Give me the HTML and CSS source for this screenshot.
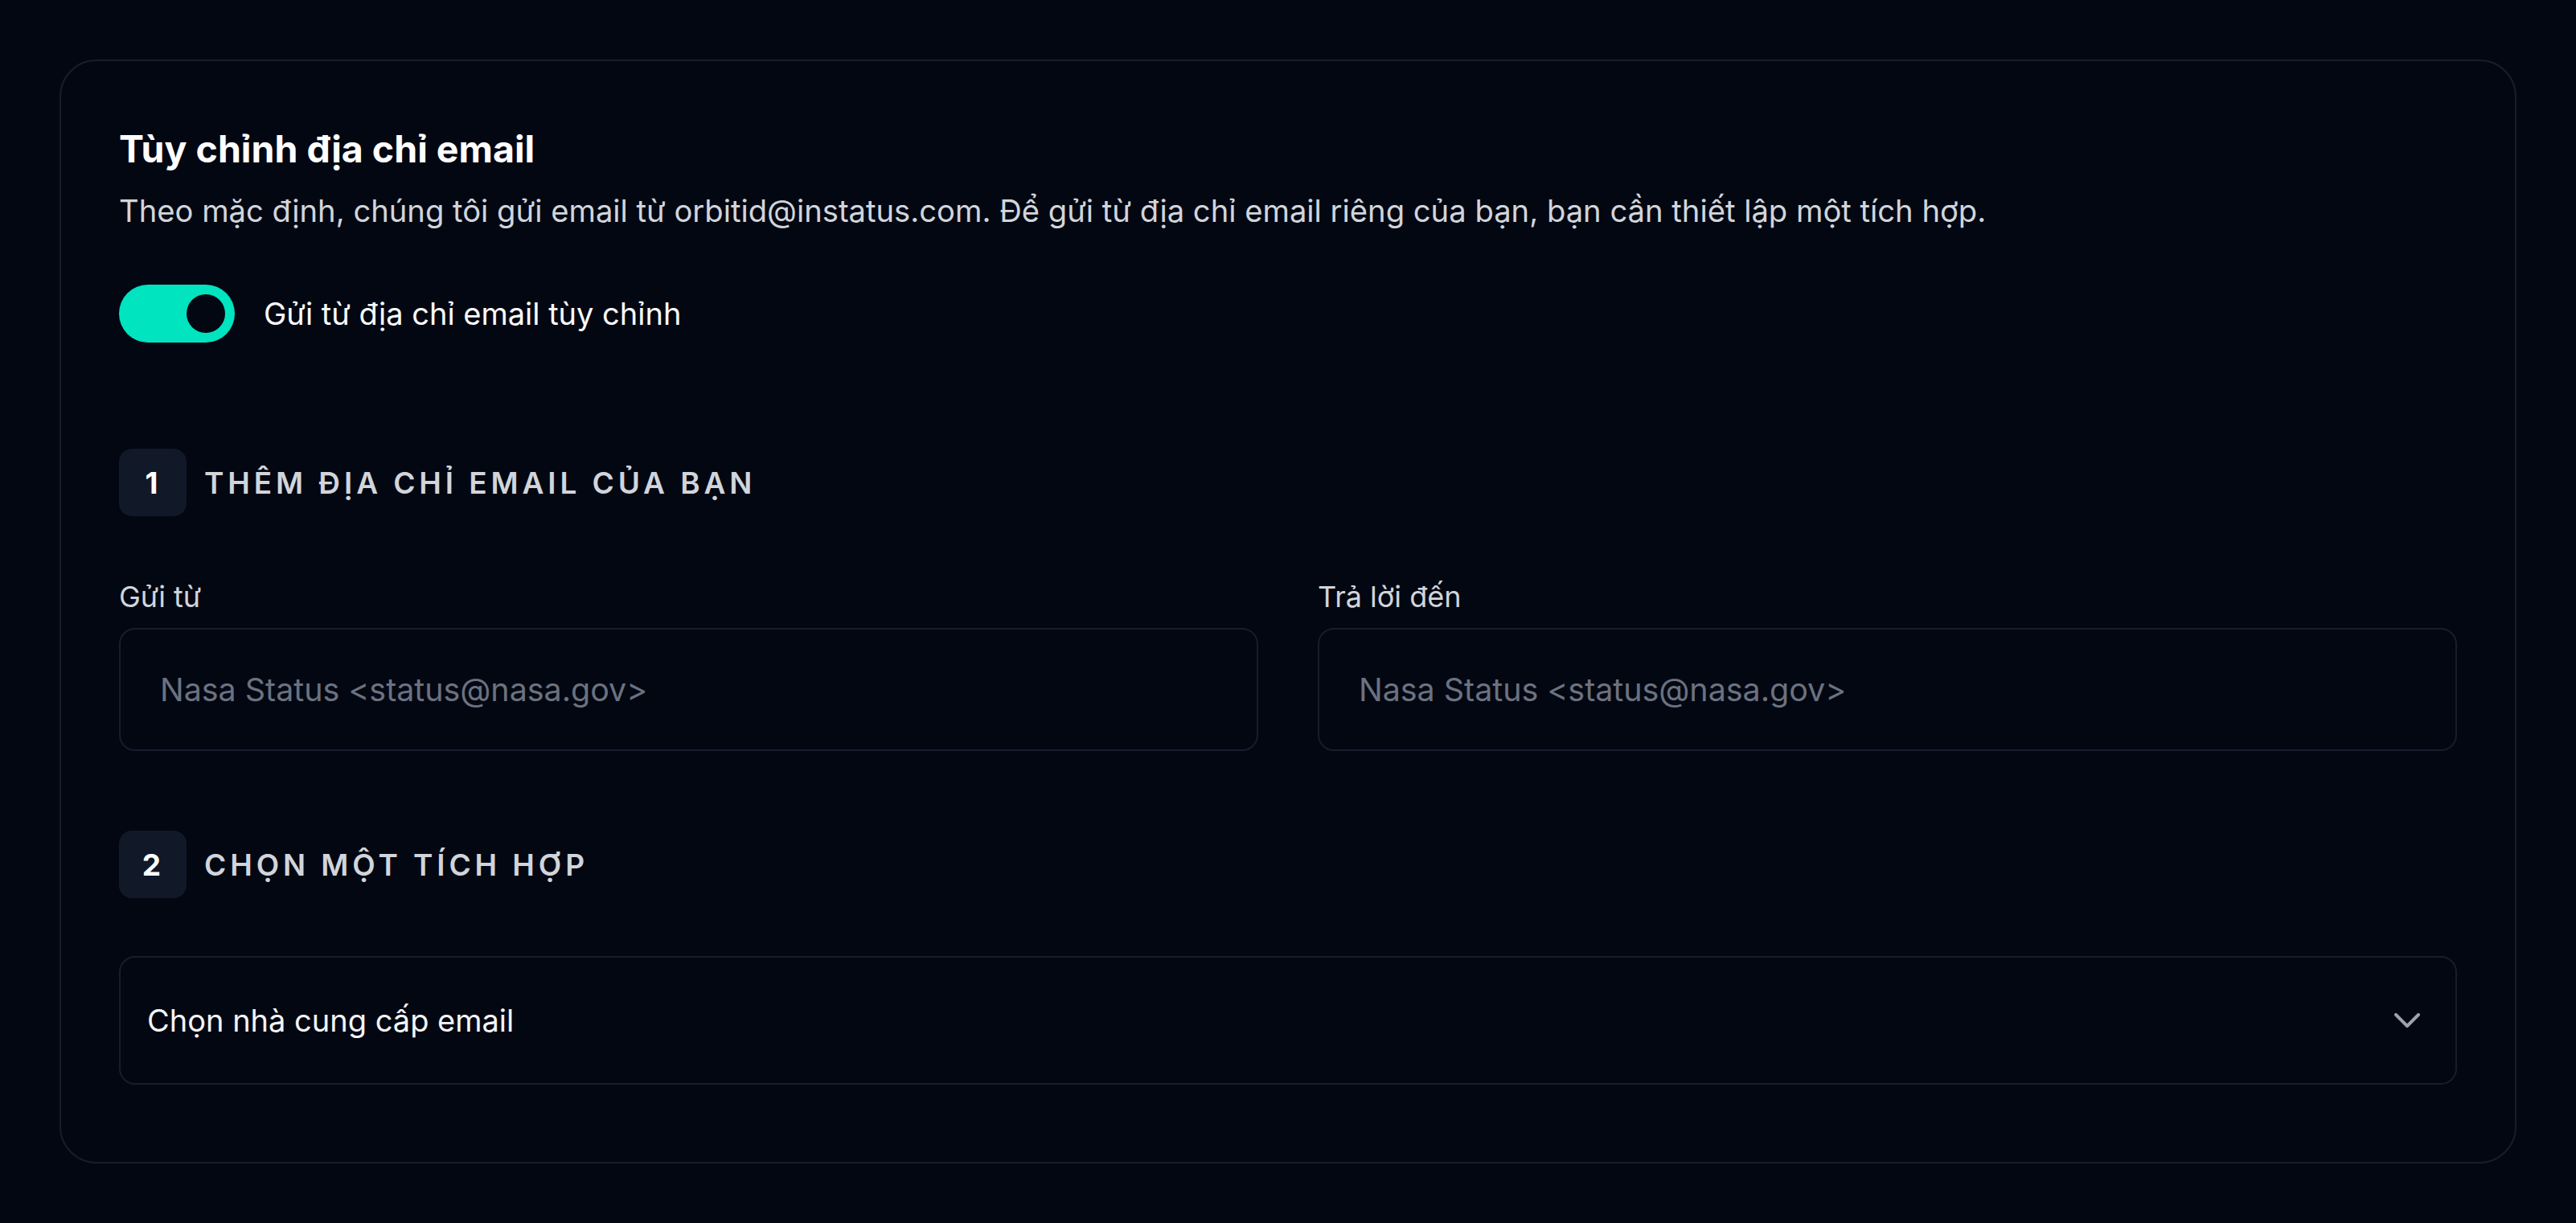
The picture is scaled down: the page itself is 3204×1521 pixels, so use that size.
FILE: index.html
```html
<!doctype html>
<html lang="vi">
<head>
<meta charset="utf-8">
<title>Tùy chỉnh địa chỉ email</title>
<link rel="stylesheet" href="styles.css">
</head>

<body>
	<div class="card">
		<h2 class="title">Tùy chỉnh địa chỉ email</h2>
		<p class="desc">Theo mặc định, chúng tôi gửi email từ orbitid@instatus.com. Để gửi từ địa chỉ email riêng của bạn, bạn cần thiết lập một tích hợp.</p>

		<label class="switch_row">
			<span class="switch on"><span class="knob"></span></span>
			<span class="switch_text">Gửi từ địa chỉ email tùy chỉnh</span>
		</label>

		<!--bước 1-->
		<div class="step">
			<span class="step_num">1</span>
			<span class="step_title">Thêm địa chỉ email của bạn</span>
		</div>
		<div class="fields">
			<div class="field">
				<label class="field_label" for="from">Gửi từ</label>
				<input class="field_input" id="from" type="text" placeholder="Nasa Status <status@nasa.gov>">
			</div>
			<div class="field">
				<label class="field_label" for="reply">Trả lời đến</label>
				<input class="field_input" id="reply" type="text" placeholder="Nasa Status <status@nasa.gov>">
			</div>
		</div>

		<!--bước 2-->
		<div class="step step2">
			<span class="step_num">2</span>
			<span class="step_title">Chọn một tích hợp</span>
		</div>
		<div class="select">
			<span class="select_text">Chọn nhà cung cấp email</span>
			<svg class="chevron" width="32" height="18" viewBox="0 0 32 18" fill="none">
				<path d="M2 2 L16 16 L30 2" stroke="#9ca3af" stroke-width="4" stroke-linecap="round" stroke-linejoin="round"/>
			</svg>
		</div>
	</div>
</body>
</html>
```

FILE: styles.css
```css
	*{
		padding: 0;
		margin: 0;
		box-sizing: border-box;
	}
	body{
		background-color: #030712;
		font-family: Inter, "Noto Sans", sans-serif;
		color: #d1d5db;
		padding: 74px;
	}
	.card{
		border: 2px solid #161d2c;
		border-radius: 46px;
		padding: 78px 72px 96px;
	}
	.title{
		font-size: 46.5px;
		line-height: 63px;
		font-weight: 700;
		color: #fff;
	}
	.desc{
		margin-top: 18px;
		font-size: 38.2px;
		line-height: 54px;
		color: #d1d5db;
	}
	.switch_row{
		display: flex;
		align-items: center;
		gap: 36px;
		margin-top: 65px;
		cursor: pointer;
	}
	.switch{
		width: 144px;
		height: 72px;
		border-radius: 36px;
		background-color: #1f2937;
		display: flex;
		align-items: center;
		padding: 0 12px;
	}
	.switch.on{
		background-color: #00e4c0;
		justify-content: flex-end;
	}
	.switch .knob{
		width: 48px;
		height: 48px;
		border-radius: 50%;
		background-color: #030712;
	}
	.switch_text{
		font-size: 38px;
		line-height: 54px;
		color: #f9fafb;
	}
	.step{
		display: flex;
		align-items: center;
		gap: 22px;
		margin-top: 132px;
	}
	.step2{
		margin-top: 99px;
	}
	.step_num{
		width: 84px;
		height: 84px;
		padding-right: 3px;
		border-radius: 16px;
		background-color: #111827;
		color: #fff;
		font-size: 37px;
		font-weight: 700;
		display: flex;
		align-items: center;
		justify-content: center;
	}
	.step_title{
		font-size: 37px;
		font-weight: 600;
		letter-spacing: 4.9px;
		text-transform: uppercase;
		color: #d1d5db;
	}
	.fields{
		display: grid;
		grid-template-columns: 1fr 1fr;
		gap: 74px;
		margin-top: 73px;
	}
	.field_label{
		display: block;
		font-size: 36px;
		line-height: 54px;
		color: #d1d5db;
	}
	.field_input{
		display: block;
		width: 100%;
		height: 153px;
		margin-top: 12px;
		padding: 0 49px;
		border: 2px solid #161d2c;
		border-radius: 20px;
		background-color: #030712;
		font-family: Inter, "Noto Sans", sans-serif;
		font-size: 39.4px;
		color: #f3f4f6;
		outline: none;
	}
	.field_input::placeholder{
		color: #6b7280;
	}
	.select{
		display: flex;
		align-items: center;
		justify-content: space-between;
		height: 160px;
		margin-top: 72px;
		padding: 0 44px 0 33px;
		border: 2px solid #161d2c;
		border-radius: 20px;
		cursor: pointer;
	}
	.select_text{
		font-size: 38px;
		color: #f3f4f6;
	}
	.chevron{
		display: block;
	}
```
